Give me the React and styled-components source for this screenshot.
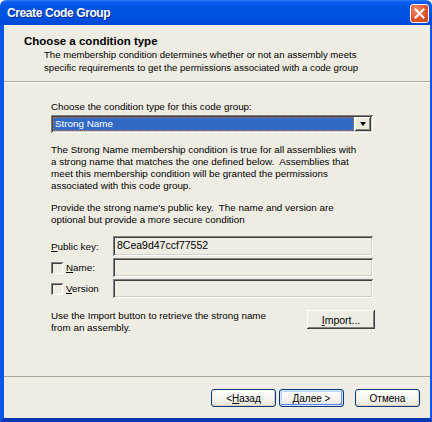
import React from 'react';
import styled, { createGlobalStyle } from 'styled-components';

const Global = createGlobalStyle`
  html, body { margin: 0; padding: 0; background: #ffffff; }
  body { font-family: "Liberation Sans", Arial, sans-serif; }
  * { box-sizing: border-box; }
`;

const Window = styled.div`
  width: 432px;
  height: 422px;
  display: flex;
  flex-direction: column;
  overflow: hidden;
`;

const TitleBar = styled.div`
  height: 25px;
  flex: none;
  display: flex;
  align-items: center;
  justify-content: space-between;
  padding: 0 3px 0 7px;
  background: linear-gradient(#2f7ef6 0px, #0a5df0 2px, #0055e6 6px, #0052e2 60%, #0049d6 100%);
  border-radius: 6px 6px 0 0;
`;

const Caption = styled.span`
  color: #fff;
  font-weight: bold;
  font-size: 12px;
  letter-spacing: -0.4px;
  text-shadow: 1px 1px 0 #0b2a8c;
`;

const CloseButton = styled.div`
  width: 19px;
  height: 19px;
  margin-top: 2px;
  border: 1px solid #fff;
  border-radius: 3px;
  background: radial-gradient(circle at 35% 30%, #f0906c 0%, #e0532c 55%, #c63d18 100%);
  display: flex;
  align-items: center;
  justify-content: center;
`;

const Frame = styled.div`
  flex: 1;
  display: flex;
  flex-direction: column;
  border-left: 4px solid #0a57e6;
  border-right: 2px solid #0a57e6;
  border-bottom: 4px solid #0a36b4;
  min-height: 0;
`;

const Client = styled.div`
  flex: 1;
  display: flex;
  flex-direction: column;
  background: #efede3;
  font-size: 9.85px;
  color: #000;
`;

const Header = styled.div`
  height: 57px;
  flex: none;
  padding: 10px 0 0 20px;
  border-bottom: 1px solid #aca899;
  box-shadow: 0 1px 0 #fff;
`;

const HeaderTitle = styled.div`
  font-weight: bold;
  font-size: 11.5px;
  line-height: 13px;
`;

const HeaderText = styled.div`
  padding-left: 20px;
  font-size: 9.6px;
  line-height: 13px;
`;

const Body = styled.div`
  flex: 1;
  display: flex;
  flex-direction: column;
  padding: 19px 0 0 47px;
  width: 373px;
`;

const Text = styled.div`
  line-height: 12px;
  margin-top: ${p => p.$mt || 0}px;
  white-space: pre-wrap;
`;

const Combo = styled.div`
  margin-top: 2px;
  height: 18px;
  width: 322px;
  display: flex;
  padding: 2px;
  background: #fff;
  box-shadow: inset 1px 1px 0 #808080, inset -1px -1px 0 #fff, inset 2px 2px 0 #404040, inset -2px -2px 0 #d4d0c8;
`;

const ComboValue = styled.div`
  flex: 1;
  background: #316ac5;
  color: #fff;
  border: 1px dotted #d8703c;
  line-height: 12px;
  padding-left: 1px;
`;

const DropButton = styled.div`
  width: 16px;
  background: #ece9d8;
  box-shadow: inset -1px -1px 0 #404040, inset 1px 1px 0 #fff, inset -2px -2px 0 #808080;
  display: flex;
  align-items: center;
  justify-content: center;
  margin-left: 1px;
`;

const Arrow = styled.div`
  width: 0;
  height: 0;
  border-left: 3.5px solid transparent;
  border-right: 3.5px solid transparent;
  border-top: 4px solid #000;
`;

const Fields = styled.div`
  margin-top: 10px;
  display: grid;
  grid-template-columns: 62px 260px;
  row-gap: 2px;
  align-items: center;
`;

const FieldLabel = styled.div`
  display: flex;
  align-items: center;
  gap: 3px;
`;

const CheckBox = styled.div`
  width: 12px;
  height: 12px;
  background: transparent;
  box-shadow: inset 1px 1px 0 #808080, inset -1px -1px 0 #fff, inset 2px 2px 0 #404040;
`;

const Field = styled.div`
  height: ${p => p.$h || 20}px;
  padding: 3px 0 0 4px;
  line-height: 13px;
  font-size: 10.5px;
  background: transparent;
  box-shadow: inset 1px 1px 0 #808080, inset -1px -1px 0 #fff, inset 2px 2px 0 #404040, inset -2px -2px 0 #d4d0c8;
`;

const ImportRow = styled.div`
  margin-top: 12px;
  display: flex;
  justify-content: space-between;
  align-items: flex-start;
  width: 324px;
`;

const ClassicButton = styled.div`
  width: 68px;
  height: 19px;
  display: flex;
  align-items: center;
  justify-content: center;
  font-size: 10.5px;
  box-shadow: inset -1px -1px 0 #404040, inset 1px 1px 0 #fff, inset -2px -2px 0 #808080;
`;

const Footer = styled.div`
  flex: none;
  height: 42px;
  border-top: 1px solid #aca899;
  display: flex;
  justify-content: flex-end;
  align-items: flex-start;
  padding: 12px 10px 0 0;
`;

const XPButton = styled.div`
  width: 65px;
  height: 18px;
  margin-left: ${p => p.$ml || 0}px;
  border: 1px solid #003c74;
  border-radius: 3px;
  display: flex;
  align-items: center;
  justify-content: center;
  font-size: 10px;
  background: linear-gradient(#ffffff 0%, #f4f3ee 60%, #e6e3d6 100%);
  box-shadow: ${p => p.$default
    ? 'inset 0 0 0 1px #cee7ff, inset -2px -2px 0 #6982ee, inset 2px 2px 0 #bcd4f6'
    : 'inset -1px -1px 0 #d6d0c5'};
`;

const Key = styled.span`
  text-decoration: underline;
`;

export default function App() {
  return (
    <>
      <Global />
      <Window>
        <TitleBar>
          <Caption>Create Code Group</Caption>
          <CloseButton>
            <svg width="11" height="11" viewBox="0 0 11 11">
              <path d="M1.5 1.5 L9.5 9.5 M9.5 1.5 L1.5 9.5" stroke="#fff" strokeWidth="2" strokeLinecap="square" />
            </svg>
          </CloseButton>
        </TitleBar>
        <Frame>
          <Client>
            <Header>
              <HeaderTitle>Choose a condition type</HeaderTitle>
              <HeaderText>
                The membership condition determines whether or not an assembly meets<br />
                specific requirements to get the permissions associated with a code group
              </HeaderText>
            </Header>
            <Body>
              <Text>Choose the condition type for this code group:</Text>
              <Combo>
                <ComboValue>Strong Name</ComboValue>
                <DropButton><Arrow /></DropButton>
              </Combo>
              <Text $mt={11}>
                The Strong Name membership condition is true for all assemblies with{'\n'}
                a strong name that matches the one defined below.  Assemblies that{'\n'}
                meet this membership condition will be granted the permissions{'\n'}
                associated with this code group.
              </Text>
              <Text $mt={10}>
                Provide the strong name's public key.  The name and version are{'\n'}
                optional but provide a more secure condition
              </Text>
              <Fields>
                <FieldLabel><span><Key>P</Key>ublic key:</span></FieldLabel>
                <Field>8Cea9d47ccf77552</Field>
                <FieldLabel><CheckBox /><span><Key>N</Key>ame:</span></FieldLabel>
                <Field $h={19} />
                <FieldLabel><CheckBox /><span><Key>V</Key>ersion</span></FieldLabel>
                <Field $h={19} />
              </Fields>
              <ImportRow>
                <Text>
                  Use the Import button to retrieve the strong name{'\n'}
                  from an assembly.
                </Text>
                <ClassicButton><span><Key>I</Key>mport...</span></ClassicButton>
              </ImportRow>
            </Body>
            <Footer>
              <XPButton>&lt; <Key>Н</Key>азад</XPButton>
              <XPButton $default $ml={3}><span><Key>Д</Key>алее &gt;</span></XPButton>
              <XPButton $ml={11}>Отмена</XPButton>
            </Footer>
          </Client>
        </Frame>
      </Window>
    </>
  );
}
